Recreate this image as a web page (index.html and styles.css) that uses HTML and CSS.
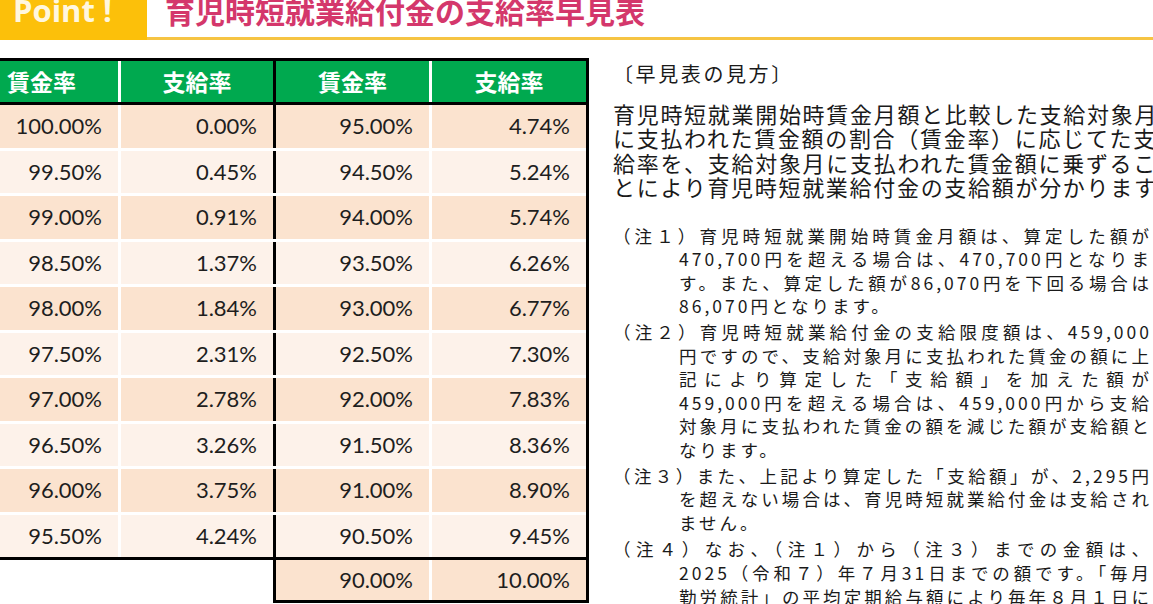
FILE: index.html
```html
<!DOCTYPE html>
<html lang="ja">
<head>
<meta charset="utf-8">
<title>育児時短就業給付金の支給率早見表</title>
<link rel="stylesheet" href="styles.css">
</head>
<body>
<header class="banner">
  <div class="point">Point !</div>
  <h1 class="title">育児時短就業給付金の支給率早見表</h1>
</header>
<main class="content">
  <section class="rate-table">
    <div class="thead">
      <div class="th">賃金率</div>
      <div class="th">支給率</div>
      <div class="th th-split">賃金率</div>
      <div class="th">支給率</div>
    </div>
    <div class="tbody">
      <div class="td odd">100.00%</div><div class="td odd">0.00%</div><div class="td odd split">95.00%</div><div class="td odd">4.74%</div>
      <div class="td even">99.50%</div><div class="td even">0.45%</div><div class="td even split">94.50%</div><div class="td even">5.24%</div>
      <div class="td odd">99.00%</div><div class="td odd">0.91%</div><div class="td odd split">94.00%</div><div class="td odd">5.74%</div>
      <div class="td even">98.50%</div><div class="td even">1.37%</div><div class="td even split">93.50%</div><div class="td even">6.26%</div>
      <div class="td odd">98.00%</div><div class="td odd">1.84%</div><div class="td odd split">93.00%</div><div class="td odd">6.77%</div>
      <div class="td even">97.50%</div><div class="td even">2.31%</div><div class="td even split">92.50%</div><div class="td even">7.30%</div>
      <div class="td odd">97.00%</div><div class="td odd">2.78%</div><div class="td odd split">92.00%</div><div class="td odd">7.83%</div>
      <div class="td even">96.50%</div><div class="td even">3.26%</div><div class="td even split">91.50%</div><div class="td even">8.36%</div>
      <div class="td odd">96.00%</div><div class="td odd">3.75%</div><div class="td odd split">91.00%</div><div class="td odd">8.90%</div>
      <div class="td even">95.50%</div><div class="td even">4.24%</div><div class="td even split">90.50%</div><div class="td even">9.45%</div>
    </div>
    <div class="tfoot">
      <div class="td odd">90.00%</div><div class="td odd">10.00%</div>
    </div>
  </section>
  <section class="guide">
    <h2 class="guide-head">〔早見表の見方〕</h2>
    <p class="guide-text">育児時短就業開始時賃金月額と比較した支給対象月<br>に支払われた賃金額の割合（賃金率）に応じてた支<br>給率を、支給対象月に支払われた賃金額に乗ずるこ<br>とにより育児時短就業給付金の支給額が分かります。</p>
    <div class="notes">
      <p class="note">
        <span class="ln first">（注１）育児時短就業開始時賃金月額は、算定した額が</span>
        <span class="ln">470,700円を超える場合は、470,700円となりま</span>
        <span class="ln">す。また、算定した額が86,070円を下回る場合は</span>
        <span class="ln end">86,070円となります。</span>
      </p>
      <p class="note">
        <span class="ln first">（注２）育児時短就業給付金の支給限度額は、459,000</span>
        <span class="ln">円ですので、支給対象月に支払われた賃金の額に上</span>
        <span class="ln">記により算定した「支給額」を加えた額が</span>
        <span class="ln">459,000円を超える場合は、459,000円から支給</span>
        <span class="ln">対象月に支払われた賃金の額を減じた額が支給額と</span>
        <span class="ln end">なります。</span>
      </p>
      <p class="note">
        <span class="ln first">（注３）また、上記より算定した「支給額」が、2,295円</span>
        <span class="ln">を超えない場合は、育児時短就業給付金は支給され</span>
        <span class="ln end">ません。</span>
      </p>
      <p class="note note-last">
        <span class="ln first">（注４）なお、（注１）から（注３）までの金額は、</span>
        <span class="ln">2025（令和７）年７月31日までの額です。「毎月</span>
        <span class="ln">勤労統計」の平均定期給与額により毎年８月１日に</span>
      </p>
    </div>
  </section>
</main>
</body>
</html>
```

FILE: styles.css
```css
html, body {
  margin: 0;
  padding: 0;
  width: 1153px;
  height: 604px;
  overflow: hidden;
  background: #ffffff;
}

body {
  font-family: "Noto Sans CJK JP", "Noto Sans", sans-serif;
  color: #1a1a1a;
}

/* ---------- banner ---------- */
.banner {
  display: flex;
  height: 40px;
}

.point {
  width: 134px;
  padding-left: 13px;
  background: #fcc00a;
  color: #fff7df;
  font-family: "Open Sans", "Liberation Sans", sans-serif;
  font-weight: 700;
  font-size: 31px;
  line-height: 21px;
}

.title {
  flex: 1;
  margin: 0;
  padding-left: 18px;
  border-bottom: 3px solid #f6c443;
  color: #d4376b;
  font-family: "Noto Sans CJK JP", sans-serif;
  font-weight: 700;
  font-size: 30px;
  line-height: 21px;
  white-space: nowrap;
}

/* ---------- layout ---------- */
.content {
  display: flex;
  align-items: flex-start;
  margin-top: 18px;
}

/* ---------- table ---------- */
.rate-table {
  flex: none;
  margin-left: -35px;
  width: 624px;
}

.thead,
.tbody {
  display: grid;
  grid-template-columns: 153px 152px 153px 154px;
  column-gap: 3px;
  background: #ffffff;
  border-right: 3px solid #000;
}

.thead {
  border-top: 3px solid #000;
  border-bottom: 3px solid #000;
  height: 41px;
}

.th {
  background: #00a94f;
  color: #ffffff;
  font-weight: 700;
  font-size: 23px;
  text-align: center;
  line-height: 41px;
}

.th-split {
  box-shadow: -3px 0 0 #000;
}

.tbody {
  row-gap: 3px;
  grid-auto-rows: 42.5px;
  border-bottom: 3px solid #000;
}

.td {
  font-family: "Lato", "Open Sans", sans-serif;
  font-size: 22px;
  color: #1e1e1e;
  text-align: right;
  padding-right: 16px;
  line-height: 42.5px;
}

.odd { background: #fbe3cf; }
.even { background: #fdf2ea; }

.split {
  box-shadow: -3px 0 0 #000;
}

.tfoot {
  display: grid;
  grid-template-columns: 153px 154px;
  column-gap: 3px;
  margin-left: 308px;
  width: 310px;
  border-left: 3px solid #000;
  border-right: 3px solid #000;
  border-bottom: 3px solid #000;
  background: #ffffff;
}

.tfoot .td {
  line-height: 40px;
}

/* ---------- guide ---------- */
.guide {
  flex: 1;
  margin-left: 24px;
  min-width: 0;
}

.guide-head {
  margin: 2px 0 0 0;
  font-weight: 400;
  font-size: 20px;
  letter-spacing: 2.6px;
  line-height: 28px;
  white-space: nowrap;
}

.guide-text {
  margin: 13px 0 0;
  font-size: 22px;
  letter-spacing: 1.7px;
  line-height: 24.4px;
  white-space: nowrap;
}

.notes {
  margin-top: 25px;
  margin-right: 1px;
}

.note {
  margin: 0 0 2px;
  padding-left: 66px;
  font-size: 17.5px;
  letter-spacing: 3px;
  line-height: 23.6px;
}

.note-last {
  margin-top: 3px;
}

.ln {
  display: block;
  text-align: justify;
  text-align-last: justify;
}

.ln.first {
  margin-left: -66px;
}

.ln.end {
  text-align-last: left;
}
```
